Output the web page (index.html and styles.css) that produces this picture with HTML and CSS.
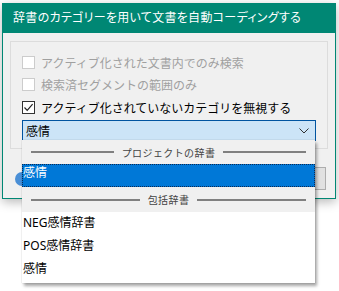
FILE: index.html
```html
<!DOCTYPE html>
<html lang="ja">
<head>
<meta charset="utf-8">
<link rel="stylesheet" href="styles.css">
</head>
<body>
<div class="window">
  <div class="titlebar">辞書のカテゴリーを用いて文書を自動コーディングする</div>
  <div class="content">
    <div class="group">
      <div class="row disabled"><span class="box"></span><span>アクティブ化された文書内でのみ検索</span></div>
      <div class="row disabled"><span class="box"></span><span>検索済セグメントの範囲のみ</span></div>
      <div class="row"><span class="box checked"><svg width="11" height="11" viewBox="0 0 11 11"><path d="M1.5 5.5 L4.2 8.3 L9.6 2.2" fill="none" stroke="#222" stroke-width="1.2"/></svg></span><span>アクティブ化されていないカテゴリを無視する</span></div>
      <div class="combo"><span>感情</span><svg class="chev" width="10" height="6" viewBox="0 0 10 6"><path d="M0.5 0.5 L5 5 L9.5 0.5" fill="none" stroke="#333" stroke-width="1"/></svg></div>
    </div>
    <div class="footer">
      <span class="help"></span>
      <span class="btn"></span>
    </div>
  </div>
</div>
<div class="popup">
  <div class="header"><span class="line"></span><span class="htext">プロジェクトの辞書</span><span class="line"></span></div>
  <div class="item selected">感情</div>
  <div class="header h2"><span class="line"></span><span class="htext">包括辞書</span><span class="line"></span></div>
  <div class="item">NEG感情辞書</div>
  <div class="item">POS感情辞書</div>
  <div class="item">感情</div>
</div>
</body>
</html>
```
FILE: styles.css
```css
html, body {
  margin: 0;
  padding: 0;
  background: #ffffff;
}
body {
  font-family: "Noto Sans", "Noto Sans CJK JP", sans-serif;
  font-size: 12px;
  color: #000;
  width: 339px;
  height: 291px;
  overflow: hidden;
}
.window {
  margin: 3px 0 0 2px;
  width: 334px;
  box-sizing: border-box;
  border: 1px solid #008774;
  border-top: none;
  background: #f0f0f0;
  box-shadow: 0 3px 10px rgba(0,0,0,0.28);
}
.titlebar {
  height: 30px;
  margin: 0 -1px;
  background: #008774;
  color: #fff;
  font-size: 12px;
  line-height: 30px;
  padding-left: 11px;
  font-feature-settings: "palt";
  letter-spacing: 0.3px;
}
.content {
  padding: 8px 7px 8px 7px;
}
.group {
  border: 1px solid #dcdcdc;
  padding: 9px 11px 10px 11px;
  height: 108px;
  box-sizing: border-box;
}
.row {
  height: 22.5px;
  display: flex;
  align-items: center;
  gap: 6px;
  font-family: "Noto Sans CJK JP", sans-serif;
  font-size: 12px;
  color: #000;
}
.row.disabled { color: #a0a0a0; }
.box {
  width: 13px;
  height: 13px;
  box-sizing: border-box;
  border: 1px solid #333;
  background: #fff;
  display: flex;
  align-items: center;
  justify-content: center;
}
.row.disabled .box { border-color: #cccccc; }
.combo {
  margin-top: 1px;
  height: 21px;
  width: 294px;
  box-sizing: border-box;
  border: 1px solid #0054a0;
  background: #cce4f7;
  display: flex;
  align-items: center;
  justify-content: space-between;
  padding: 0 6px 0 3px;
  font-family: "Noto Sans CJK JP", sans-serif;
  font-size: 12px;
}
.chev { margin-top: 1px; }
.footer {
  margin-top: 18px;
  height: 23px;
  display: flex;
  align-items: center;
  justify-content: space-between;
  padding: 0 2px 0 5px;
}
.help {
  width: 14px;
  height: 14px;
  border-radius: 50%;
  background: #4a8fd6;
}
.btn {
  width: 75px;
  height: 23px;
  box-sizing: border-box;
  border: 1px solid #adadad;
  background: #e1e1e1;
}
.popup {
  position: absolute;
  left: 22px;
  top: 140px;
  width: 293px;
  background: #fff;
  box-shadow: 2px 3px 3px rgba(0,0,0,0.35), 0 0 1px rgba(0,0,0,0.25);
  padding-bottom: 2px;
}
.header {
  height: 24px;
  background: #f0f0f0;
  display: flex;
  align-items: center;
  padding: 0 9px;
}
.header.h2 { height: 25px; }
.line {
  flex: 1;
  height: 2px;
  background: #808080;
}
.htext {
  font-family: "Noto Sans CJK JP", sans-serif;
  font-size: 10px;
  color: #444;
  padding: 0 8px;
  letter-spacing: 0.4px;
}
.item {
  height: 23px;
  line-height: 22px;
  padding-left: 1px;
  box-sizing: border-box;
  font-family: "Noto Sans", "Noto Sans CJK JP", sans-serif;
  font-size: 12px;
  color: #000;
}
.item.selected {
  background: #0078d7;
  color: #fff;
  border: 1px dotted #0b2a55;
  line-height: 16px;
  padding-left: 0;
}
```
